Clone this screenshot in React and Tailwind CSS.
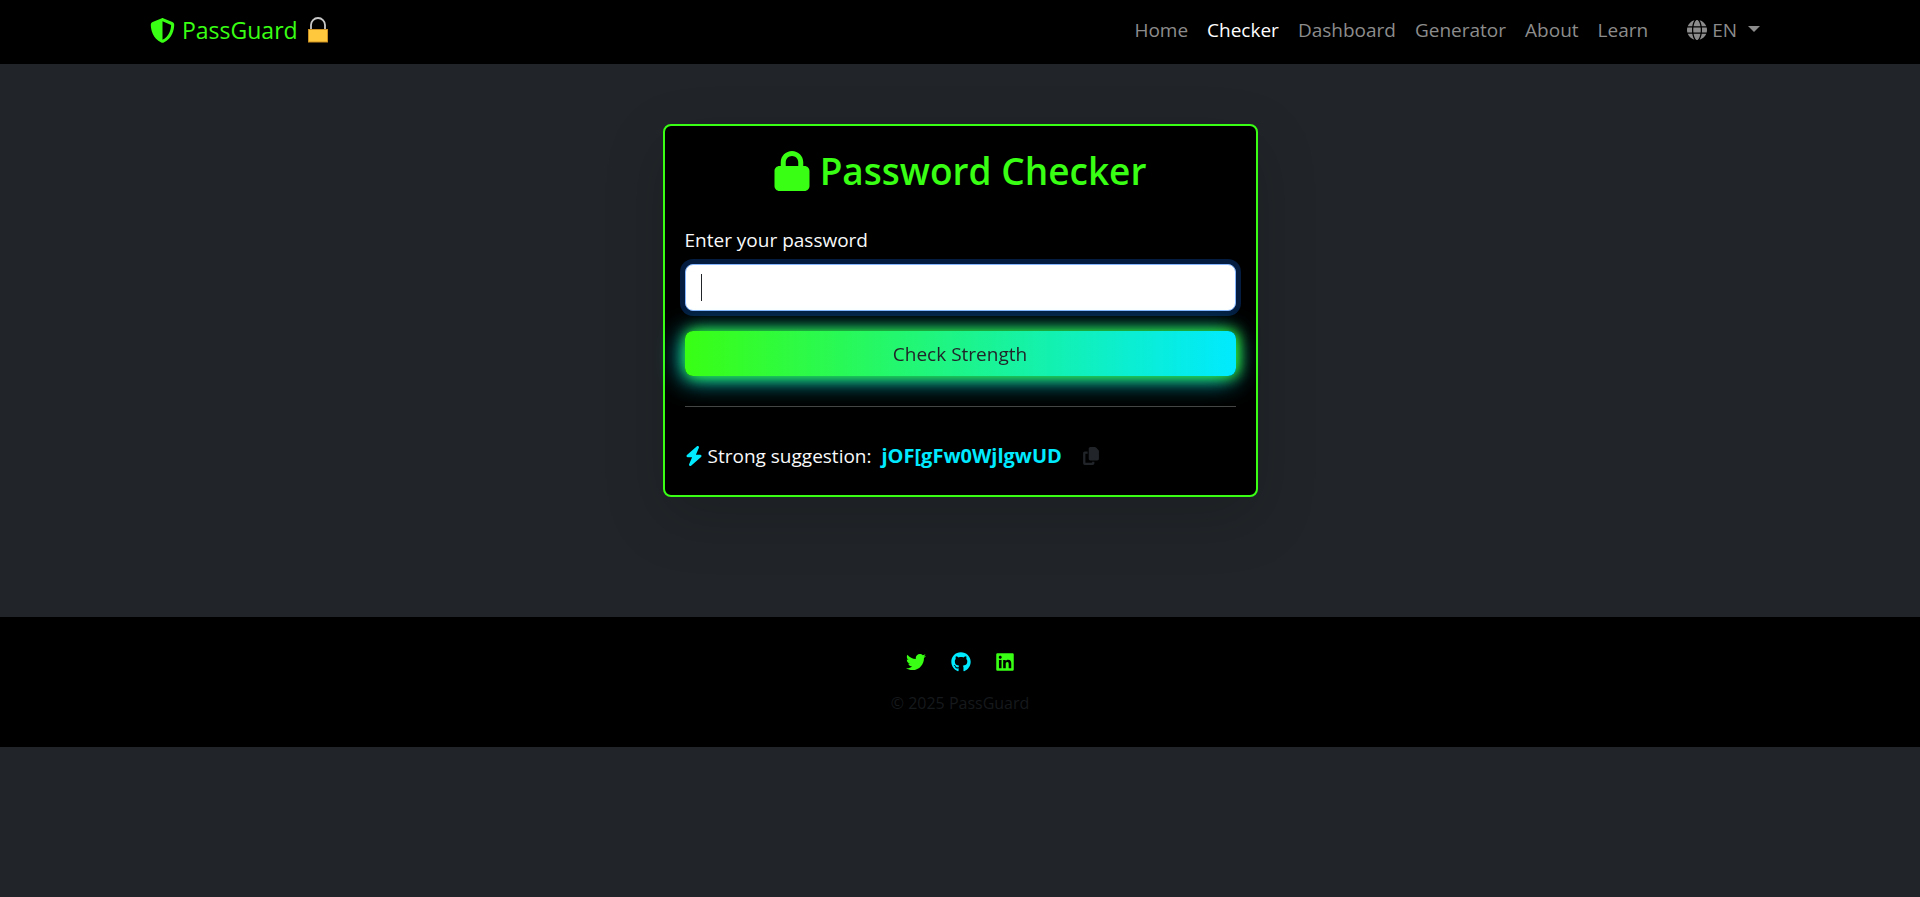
import React, { useState } from 'react';
import {
  FaShieldHalved,
  FaLock,
  FaGlobe,
  FaBolt,
  FaCopy,
  FaTwitter,
  FaGithub,
  FaLinkedin,
} from 'react-icons/fa6';

const NAV_LINKS = [
  { href: '#home', label: 'Home' },
  { href: '#checker', label: 'Checker', active: true },
  { href: '#dashboard', label: 'Dashboard' },
  { href: '#generator', label: 'Generator' },
  { href: '#about', label: 'About' },
  { href: '#learn', label: 'Learn' },
];

const SOCIAL_LINKS = [
  { href: '#twitter', label: 'Twitter', icon: <FaTwitter className="h-5 w-5" />, color: 'text-[#39ff14]' },
  { href: '#github', label: 'GitHub', icon: <FaGithub className="h-5 w-5" />, color: 'text-[#00eaff]' },
  { href: '#linkedin', label: 'LinkedIn', icon: <FaLinkedin className="h-5 w-[18px]" />, color: 'text-[#39ff14]' },
];

const SUGGESTION = 'jOF[gFw0WjlgwUD';

function Padlock() {
  return (
    <svg width="20" height="26" viewBox="0 0 20 26" aria-hidden="true">
      <path d="M3 13V8a7 7 0 0 1 14 0v5" fill="none" stroke="#c8c8c8" strokeWidth="1.8" />
      <rect x="0.5" y="12.5" width="19" height="12.5" fill="#ffc83d" stroke="#c98f22" />
    </svg>
  );
}

function Navbar() {
  return (
    <nav className="bg-black">
      <div className="mx-auto flex h-16 max-w-[1650px] items-center justify-between px-[15px] pb-1">
        <a href="#home" className="flex items-center text-[23px] text-[#39ff14]">
          <FaShieldHalved className="mr-[7px] h-[25px] w-[25px]" />
          <span className="mr-[10px]">PassGuard</span>
          <Padlock />
        </a>
        <div className="flex items-center">
          <ul className="flex gap-px">
            {NAV_LINKS.map((link) => (
              <li key={link.label}>
                <a href={link.href} className={`px-[9px] ${link.active ? 'text-white' : 'text-[#8c8c8c]'}`}>
                  {link.label}
                </a>
              </li>
            ))}
          </ul>
          <button type="button" className="ml-5 flex items-center px-[10px] text-[#8c8c8c]">
            <FaGlobe className="mr-[5px] h-5 w-5" />
            EN
            <span className="mb-[2px] ml-[11px] border-x-6 border-t-6 border-x-transparent border-t-current" />
          </button>
        </div>
      </div>
    </nav>
  );
}

function CheckerCard() {
  const [password, setPassword] = useState('');

  return (
    <section className="w-full max-w-[595px] rounded-lg border-2 border-[#39ff14] bg-black p-5 shadow-[0_20px_60px_rgba(0,0,0,0.175)]">
      <h1 className="flex items-center justify-center text-[37px] leading-[50px] font-semibold text-[#39ff14]">
        <FaLock className="mr-[10px] h-10 w-9" />
        Password Checker
      </h1>
      <form className="mt-[29px]" onSubmit={(e) => e.preventDefault()}>
        <label htmlFor="password" className="block leading-[30px] text-[#f8f9fa]">
          Enter your password
        </label>
        <div className="relative mt-[9px]">
          <input
            id="password"
            type="password"
            autoFocus
            value={password}
            onChange={(e) => setPassword(e.target.value)}
            className={`block h-[47px] w-full rounded-lg border border-[#86b7fe] bg-white px-[15px] text-[#212529] ring-5 ring-[#0d6efd]/25 outline-none ${password ? '' : 'caret-transparent'}`}
          />
          {/* steady cursor while the field is empty */}
          {!password && <span className="pointer-events-none absolute top-[10px] left-4 h-[27px] w-px bg-[#212529]" />}
        </div>
        <button
          type="submit"
          className="relative mt-5 block h-[45px] w-full rounded-lg bg-linear-to-r/srgb from-[#39ff14] to-[#00eaff] pt-[2px] text-[#212529] shadow-[2px_0_14px_#39ff14,-2px_3px_24px_#00eaff]"
        >
          Check Strength
        </button>
      </form>
      <hr className="my-[30px] border-t border-[#454545]" />
      <div className="flex h-[38px] items-center text-[#f8f9fa]">
        <FaBolt className="mr-[5px] h-5 w-[18px] text-[#00eaff]" />
        <span>Strong suggestion:</span>
        <span className="ml-[10px] text-xl font-bold text-[#00eaff]">{SUGGESTION}</span>
        <button type="button" aria-label="Copy suggestion" className="ml-5 text-[#212529]">
          <FaCopy className="h-[18px] w-[18px]" />
        </button>
      </div>
    </section>
  );
}

function Footer() {
  return (
    <footer className="bg-black pt-[30px] pb-7 text-center">
      <div className="flex h-[30px] items-center justify-center gap-[25px]">
        {SOCIAL_LINKS.map((link) => (
          <a key={link.label} href={link.href} aria-label={link.label} className={link.color}>
            {link.icon}
          </a>
        ))}
      </div>
      <p className="mt-[10px] text-base leading-8 text-[#16191c]">© 2025 PassGuard</p>
    </footer>
  );
}

export default function App() {
  return (
    <div className="min-h-screen bg-[#212529] font-['Open_Sans',sans-serif] text-[19px]">
      <Navbar />
      <main className="flex justify-center px-[15px] pt-15 pb-30">
        <CheckerCard />
      </main>
      <Footer />
    </div>
  );
}
